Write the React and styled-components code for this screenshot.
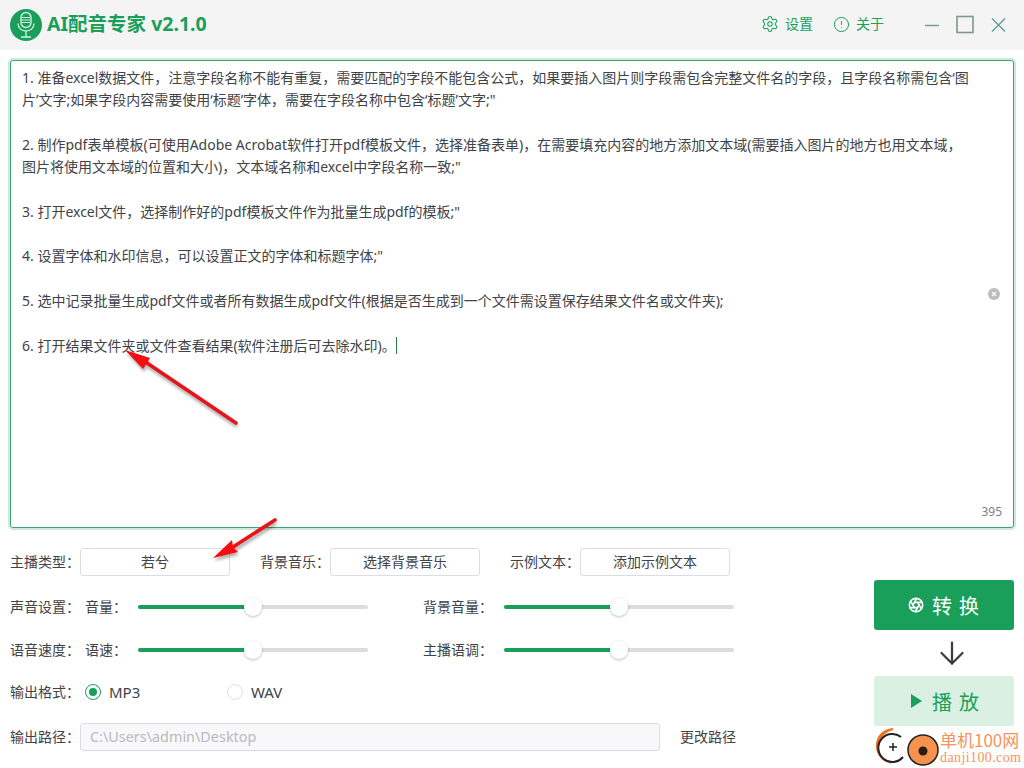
import React from "react";
import styled, { createGlobalStyle } from "styled-components";
import { Settings, CircleAlert, Aperture, ArrowDown } from "lucide-react";

const GREEN = "#1a9f5a";
const TEXT = "#404348";

const GlobalStyle = createGlobalStyle`
  html, body {
    margin: 0;
    padding: 0;
    background: #fff;
  }
  body {
    width: 1024px;
    height: 768px;
    overflow: hidden;
    font-family: "Noto Sans", "Noto Sans CJK SC", sans-serif;
    color: ${TEXT};
  }
`;

const Page = styled.div`
  position: relative;
  width: 1024px;
  height: 768px;
  overflow: hidden;
`;

const Header = styled.header`
  height: 50px;
  background: #f4f4f4;
  display: flex;
  align-items: center;
  padding: 0 18px 0 10px;
  box-sizing: border-box;
`;

const Brand = styled.div`
  display: flex;
  align-items: center;
  gap: 5px;
  flex: 1;
  color: ${GREEN};
  font-size: 19.5px;
  line-height: 32px;
  font-weight: 700;
`;

const BrandName = styled.span`
  padding-bottom: 2px;
`;

const HeaderLink = styled.div`
  display: flex;
  align-items: center;
  gap: 6px;
  margin-right: 20px;
  color: ${GREEN};
  font-size: 14px;
  line-height: 20px;
  padding-bottom: 2px;
`;

const WindowButtons = styled.div`
  display: flex;
  align-items: center;
  gap: 16px;
  margin-left: 20px;
`;

const Editor = styled.div`
  position: relative;
  height: 468px;
  margin: 10px 10px 0;
  box-sizing: border-box;
  border: 1px solid #35a86d;
  border-radius: 3px;
  box-shadow: 0 0 0 2px #cdeadb;
  padding: 6px 11px;
`;

const EditorText = styled.div`
  font-size: 14px;
  line-height: 22.3px;
  white-space: pre;
  color: ${TEXT};
`;

const Caret = styled.span`
  display: inline-block;
  width: 1px;
  height: 17px;
  background: #2f7d55;
  vertical-align: -3px;
`;

const ClearButton = styled.span`
  position: absolute;
  top: 227px;
  right: 13px;
  width: 12px;
  height: 12px;
  border-radius: 50%;
  background: #bdbdbd;
  color: #fff;
  display: flex;
  align-items: center;
  justify-content: center;
`;

const Counter = styled.span`
  position: absolute;
  right: 11px;
  bottom: 7px;
  font-size: 12px;
  color: #808080;
`;

const Controls = styled.div`
  display: flex;
  margin-top: 20px;
  padding: 0 10px;
`;

const Form = styled.div`
  width: 864px;
  display: flex;
  flex-direction: column;
`;

const Row = styled.div`
  display: flex;
  align-items: center;
  height: 28px;
  margin-top: ${(p) => p.$top || 0}px;
  font-size: 14px;
`;

const Label = styled.span`
  width: ${(p) => p.$width || 70}px;
  flex: none;
  margin-left: ${(p) => p.$left || 0}px;
  padding-bottom: 2px;
  white-space: nowrap;
`;

const PlainButton = styled.div`
  width: 150px;
  height: 28px;
  flex: none;
  box-sizing: border-box;
  border: 1px solid #dcdde4;
  border-radius: 3px;
  display: flex;
  align-items: center;
  justify-content: center;
  font-size: 14px;
  padding-bottom: 2px;
  margin-right: 30px;
`;

const Track = styled.div`
  position: relative;
  width: 230px;
  height: 4px;
  flex: none;
  margin-left: ${(p) => p.$left || 0}px;
  border-radius: 2px;
  background: #dcdcdf;
`;

const TrackFill = styled.div`
  height: 100%;
  border-radius: 2px;
  background: ${GREEN};
`;

const Thumb = styled.div`
  position: absolute;
  top: -7px;
  width: 18px;
  height: 18px;
  margin-left: -9px;
  border-radius: 50%;
  background: #fff;
  box-shadow: 0 1px 3px rgba(0, 0, 0, 0.25);
`;

const RadioOption = styled.div`
  display: flex;
  align-items: center;
  gap: 8px;
  width: 142px;
  flex: none;
  font-size: 15px;
  line-height: 18px;
`;

const RadioMark = styled.span`
  width: 16px;
  height: 16px;
  box-sizing: border-box;
  border-radius: 50%;
  border: 1px solid ${(p) => (p.$checked ? GREEN : "#e2e2e2")};
  display: flex;
  align-items: center;
  justify-content: center;
  &::after {
    content: "";
    width: 8px;
    height: 8px;
    border-radius: 50%;
    background: ${(p) => (p.$checked ? GREEN : "transparent")};
  }
`;

const PathInput = styled.div`
  width: 580px;
  height: 28px;
  flex: none;
  box-sizing: border-box;
  border: 1px solid #dcdde4;
  border-radius: 3px;
  background: #f8f8fb;
  color: #b8b9bd;
  font-size: 14.4px;
  line-height: 26px;
  padding-left: 9px;
`;

const PathLink = styled.span`
  margin-left: 20px;
  padding-bottom: 2px;
  font-size: 14px;
`;

const Actions = styled.div`
  width: 140px;
  flex: none;
  margin-top: 32px;
  display: flex;
  flex-direction: column;
  align-items: center;
`;

const ActionButton = styled.div`
  width: 140px;
  height: 50px;
  box-sizing: border-box;
  padding-left: 6px;
  border-radius: 3px;
  background: ${(p) => (p.$light ? "#d9f0e3" : GREEN)};
  color: ${(p) => (p.$light ? GREEN : "#fff")};
  display: flex;
  align-items: center;
  justify-content: center;
  gap: 8px;
  font-size: 20px;
  letter-spacing: 7px;
`;

const ArrowSlot = styled.div`
  height: 46px;
  padding-left: 16px;
  display: flex;
  align-items: center;
  justify-content: center;
  color: #3a3d42;
`;

const PointerLayer = styled.svg`
  position: absolute;
  left: 0;
  top: 0;
  pointer-events: none;
`;

const Watermark = styled.div`
  position: absolute;
  right: 0;
  bottom: 0;
  width: 150px;
  height: 42px;
  display: flex;
  align-items: center;
`;

const WatermarkText = styled.div`
  display: flex;
  flex-direction: column;
  color: #f7935a;
  font-family: "Liberation Serif", "Noto Sans CJK SC", serif;
`;

const WatermarkTitle = styled.span`
  font-family: "Noto Sans CJK SC", sans-serif;
  font-size: 17px;
  line-height: 21px;
  white-space: nowrap;
`;

const WatermarkUrl = styled.span`
  font-size: 14px;
  line-height: 16px;
  letter-spacing: 0.4px;
  white-space: nowrap;
`;

const GUIDE = `1. 准备excel数据文件，注意字段名称不能有重复，需要匹配的字段不能包含公式，如果要插入图片则字段需包含完整文件名的字段，且字段名称需包含‘图
片’文字;如果字段内容需要使用‘标题’字体，需要在字段名称中包含‘标题’文字;"

2. 制作pdf表单模板(可使用Adobe Acrobat软件打开pdf模板文件，选择准备表单)，在需要填充内容的地方添加文本域(需要插入图片的地方也用文本域，
图片将使用文本域的位置和大小)，文本域名称和excel中字段名称一致;"

3. 打开excel文件，选择制作好的pdf模板文件作为批量生成pdf的模板;"

4. 设置字体和水印信息，可以设置正文的字体和标题字体;"

5. 选中记录批量生成pdf文件或者所有数据生成pdf文件(根据是否生成到一个文件需设置保存结果文件名或文件夹);

6. 打开结果文件夹或文件查看结果(软件注册后可去除水印)。`;

const Logo = () => (
  <svg width="32" height="32" viewBox="0 0 32 32">
    <circle cx="16" cy="16" r="16" fill={GREEN} />
    <rect x="11" y="3.5" width="10" height="15" rx="5" fill="none" stroke="#d5efe1" strokeWidth="1.4" />
    <path d="M12 8.5h8M11.5 11h9M11.5 13.5h9" stroke="#d5efe1" strokeWidth="1" />
    <path d="M8 14.5c0 10 16 10 16 0M16 22V27.5M11 28h10" fill="none" stroke="#d5efe1" strokeWidth="1.3" />
  </svg>
);

const Slider = ({ value, left }) => (
  <Track $left={left}>
    <TrackFill style={{ width: `${value}%` }} />
    <Thumb style={{ left: `${value}%` }} />
  </Track>
);

const RedArrow = ({ d, head }) => (
  <g>
    <path d={d} stroke="rgba(0,0,0,0.3)" strokeWidth="4" fill="none" transform="translate(1 3)" filter="url(#soft)" />
    <path d={head} fill="rgba(0,0,0,0.3)" transform="translate(1 3)" filter="url(#soft)" />
    <path d={d} stroke="#e8141a" strokeWidth="3.6" fill="none" strokeLinecap="round" />
    <path d={head} fill="#f50d12" />
  </g>
);

export default function App() {
  return (
    <Page>
      <GlobalStyle />
      <Header>
        <Brand>
          <Logo />
          <BrandName>AI配音专家 v2.1.0</BrandName>
        </Brand>
        <HeaderLink>
          <Settings size={18} strokeWidth={1.4} />
          设置
        </HeaderLink>
        <HeaderLink>
          <CircleAlert size={17} strokeWidth={1.4} />
          关于
        </HeaderLink>
        <WindowButtons>
          <svg width="16" height="20" viewBox="0 0 16 20">
            <path d="M1 10.5h14" stroke="#6f9c8a" strokeWidth="1.4" />
          </svg>
          <svg width="18" height="20" viewBox="0 0 18 20">
            <rect x="1" y="1.5" width="16" height="16" fill="none" stroke="#7f9a88" strokeWidth="1.6" />
          </svg>
          <svg width="16" height="20" viewBox="0 0 16 20">
            <path d="M2 3.5l13 13M15 3.5l-13 13" stroke="#5f9c90" strokeWidth="1.4" />
          </svg>
        </WindowButtons>
      </Header>

      <Editor>
        <EditorText>
          {GUIDE}
          <Caret />
        </EditorText>
        <ClearButton>
          <svg width="6" height="6" viewBox="0 0 6 6">
            <path d="M1 1l4 4M5 1l-4 4" stroke="#fff" strokeWidth="1.2" />
          </svg>
        </ClearButton>
        <Counter>395</Counter>
      </Editor>

      <Controls>
        <Form>
          <Row>
            <Label>主播类型：</Label>
            <PlainButton>若兮</PlainButton>
            <Label>背景音乐：</Label>
            <PlainButton>选择背景音乐</PlainButton>
            <Label>示例文本：</Label>
            <PlainButton>添加示例文本</PlainButton>
          </Row>
          <Row $top={17}>
            <Label $width={75}>声音设置：</Label>
            <Label $width={53}>音量：</Label>
            <Slider value={50} />
            <Label $left={55} $width={81}>背景音量：</Label>
            <Slider value={50} />
          </Row>
          <Row $top={15}>
            <Label $width={75}>语音速度：</Label>
            <Label $width={53}>语速：</Label>
            <Slider value={50} />
            <Label $left={55} $width={81}>主播语调：</Label>
            <Slider value={50} />
          </Row>
          <Row $top={14}>
            <Label $width={75}>输出格式：</Label>
            <RadioOption>
              <RadioMark $checked />
              MP3
            </RadioOption>
            <RadioOption>
              <RadioMark />
              WAV
            </RadioOption>
          </Row>
          <Row $top={17}>
            <Label>输出路径：</Label>
            <PathInput>C:\Users\admin\Desktop</PathInput>
            <PathLink>更改路径</PathLink>
          </Row>
        </Form>
        <Actions>
          <ActionButton>
            <Aperture size={16} strokeWidth={2.4} />
            转换
          </ActionButton>
          <ArrowSlot>
            <ArrowDown size={36} strokeWidth={1.5} />
          </ArrowSlot>
          <ActionButton $light>
            <svg width="16" height="14" viewBox="0 0 16 14">
              <path d="M3 0l11 7-11 7z" fill={GREEN} />
            </svg>
            播放
          </ActionButton>
        </Actions>
      </Controls>

      <PointerLayer width="1024" height="768" viewBox="0 0 1024 768">
        <defs>
          <filter id="soft">
            <feGaussianBlur stdDeviation="1.5" />
          </filter>
        </defs>
        <RedArrow d="M236 423L147 363" head="M125 350L150 358L147 363L143 369z" />
        <RedArrow d="M275 520L233 547" head="M213 558L232 540L233 547L238 552z" />
      </PointerLayer>

      <Watermark>
        <svg width="66" height="42" viewBox="0 0 66 42">
          <path d="M19 2C8 3 1 11 2 22c1 8 7 14 16 16-7-3-13-9-13-17C5 12 11 6 19 4z" fill="#f26f1d" />
          <path d="M27 11a14 14 0 1 0 2 20" fill="none" stroke="#222" strokeWidth="2" />
          <path d="M15 21h8M19 17v8" stroke="#222" strokeWidth="1.5" />
          <circle cx="49" cy="24" r="15" fill="#f7924e" stroke="#222" strokeWidth="1.5" />
          <circle cx="49" cy="25" r="4.5" fill="#2a1c14" />
        </svg>
        <WatermarkText>
          <WatermarkTitle>单机100网</WatermarkTitle>
          <WatermarkUrl>danji100.com</WatermarkUrl>
        </WatermarkText>
      </Watermark>
    </Page>
  );
}
